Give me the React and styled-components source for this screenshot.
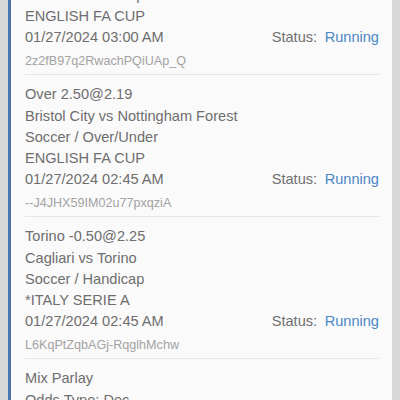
import React from 'react';
import styled, { createGlobalStyle } from 'styled-components';

const GlobalStyle = createGlobalStyle`
  html, body {
    margin: 0;
    padding: 0;
    background: #d8d8d8;
  }
`;

const Page = styled.div`
  height: 400px;
  padding: 0 8px;
  background: #d8d8d8;
  overflow: hidden;
`;

const Panel = styled.div`
  height: 400px;
  background: #fafafa;
  border-left: 3px solid #4a74a9;
  padding: 0 13px 0 14px;
  overflow: hidden;
  font-family: "Liberation Sans", Arial, sans-serif;
`;

const List = styled.div`
  margin-top: -67px;
`;

const Bet = styled.div`
  padding: 9.3px 0 4.2px;
  border-bottom: 1px solid #e6e6e6;
`;

const Line = styled.div`
  font-size: 14.6px;
  line-height: 21.25px;
  color: #6e6e6e;
  white-space: nowrap;
`;

const DateRow = styled(Line)`
  display: flex;
  justify-content: space-between;
`;

const Status = styled.span`
  color: #707070;
`;

const StatusValue = styled.span`
  color: ${props => props.color || '#4a87c6'};
  margin-left: 7.5px;
`;

const Ticket = styled.div`
  margin-top: 3.25px;
  font-size: 12.6px;
  line-height: 18px;
  color: #a3a3a3;
  white-space: nowrap;
`;

const bets = [
  {
    title: 'Nottingham Forest -0.25@1.95',
    match: 'Bristol City vs Nottingham Forest',
    sport: 'Soccer / Handicap',
    league: 'ENGLISH FA CUP',
    date: '01/27/2024 03:00 AM',
    status: 'Running',
    ticket: '2z2fB97q2RwachPQiUAp_Q'
  },
  {
    title: 'Over 2.50@2.19',
    match: 'Bristol City vs Nottingham Forest',
    sport: 'Soccer / Over/Under',
    league: 'ENGLISH FA CUP',
    date: '01/27/2024 02:45 AM',
    status: 'Running',
    ticket: '--J4JHX59IM02u77pxqziA'
  },
  {
    title: 'Torino -0.50@2.25',
    match: 'Cagliari vs Torino',
    sport: 'Soccer / Handicap',
    league: '*ITALY SERIE A',
    date: '01/27/2024 02:45 AM',
    status: 'Running',
    ticket: 'L6KqPtZqbAGj-RqglhMchw'
  }
];

const App = () => {
  return (
    <Page>
      <GlobalStyle />
      <Panel>
        <List>
          {bets.map((bet, index) => (
            <Bet key={index}>
              <Line>{bet.title}</Line>
              <Line>{bet.match}</Line>
              <Line>{bet.sport}</Line>
              <Line>{bet.league}</Line>
              <DateRow>
                <span>{bet.date}</span>
                <Status>
                  Status:<StatusValue>{bet.status}</StatusValue>
                </Status>
              </DateRow>
              <Ticket>{bet.ticket}</Ticket>
            </Bet>
          ))}
          <Bet>
            <Line>Mix Parlay</Line>
            <Line>Odds Type: Dec</Line>
            <Line>Stake: 10.00</Line>
          </Bet>
        </List>
      </Panel>
    </Page>
  );
};

export default App;
